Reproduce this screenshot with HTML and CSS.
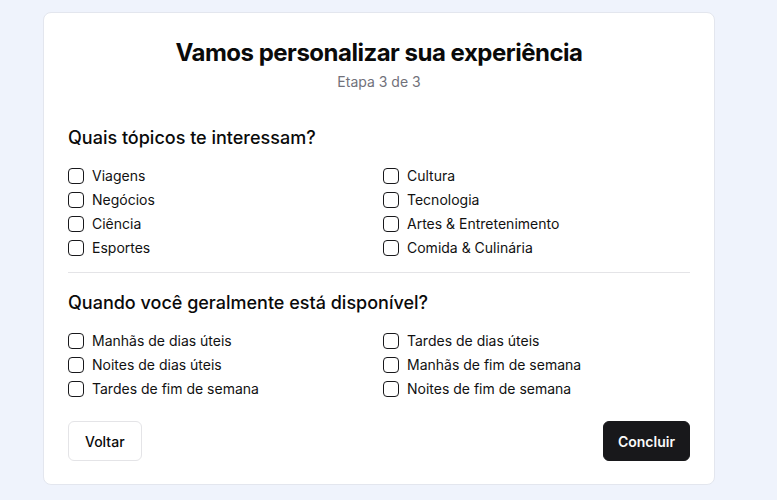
FILE: index.html
```html
<!DOCTYPE html>
<html lang="pt">
<head>
<meta charset="utf-8">
<link rel="stylesheet" href="styles.css">
</head>
<body>
<div class="page">
  <div class="card">
    <header class="head">
      <h1 class="title">Vamos personalizar sua experiência</h1>
      <p class="step">Etapa 3 de 3</p>
    </header>
    <section class="group">
      <h2 class="question">Quais tópicos te interessam?</h2>
      <div class="options">
        <label class="opt"><span class="box"></span>Viagens</label>
        <label class="opt"><span class="box"></span>Cultura</label>
        <label class="opt"><span class="box"></span>Negócios</label>
        <label class="opt"><span class="box"></span>Tecnologia</label>
        <label class="opt"><span class="box"></span>Ciência</label>
        <label class="opt"><span class="box"></span>Artes &amp; Entretenimento</label>
        <label class="opt"><span class="box"></span>Esportes</label>
        <label class="opt"><span class="box"></span>Comida &amp; Culinária</label>
      </div>
    </section>
    <hr class="divider">
    <section class="group">
      <h2 class="question">Quando você geralmente está disponível?</h2>
      <div class="options">
        <label class="opt"><span class="box"></span>Manhãs de dias úteis</label>
        <label class="opt"><span class="box"></span>Tardes de dias úteis</label>
        <label class="opt"><span class="box"></span>Noites de dias úteis</label>
        <label class="opt"><span class="box"></span>Manhãs de fim de semana</label>
        <label class="opt"><span class="box"></span>Tardes de fim de semana</label>
        <label class="opt"><span class="box"></span>Noites de fim de semana</label>
      </div>
    </section>
    <footer class="actions">
      <button class="btn btn-back">Voltar</button>
      <button class="btn btn-next">Concluir</button>
    </footer>
  </div>
</div>
</body>
</html>
```
FILE: styles.css
```css
* { box-sizing: border-box; }
html, body { margin: 0; padding: 0; }
body {
  background: #eff3fc;
  font-family: Inter, "Liberation Sans", Arial, sans-serif;
  color: #111;
}
.page {
  padding: 12px 0 0 43px;
}
.card {
  width: 672px;
  background: #fff;
  border: 1px solid #e3e6ee;
  border-radius: 8px;
  padding: 24px 24px 23px;
}
.head { text-align: center; }
.title {
  margin: 0;
  font-size: 24px;
  line-height: 32px;
  font-weight: 700;
  letter-spacing: -0.5px;
  color: #0a0a0a;
}
.step {
  margin: 3px 0 0;
  font-size: 14px;
  line-height: 20px;
  color: #71717a;
}
.group { margin-top: 32px; }
.group + .divider + .group { margin-top: 0; }
.question {
  margin: 0 0 14px;
  font-size: 18px;
  line-height: 28px;
  font-weight: 500;
  color: #0a0a0a;
}
.options {
  display: grid;
  grid-template-columns: 1fr 1fr;
  column-gap: 8px;
  row-gap: 4px;
}
.opt {
  display: flex;
  align-items: center;
  gap: 8px;
  font-size: 14px;
  line-height: 20px;
  color: #111;
}
.box {
  width: 16px;
  height: 16px;
  border: 1.5px solid #18181b;
  border-radius: 4px;
  flex: none;
}
.divider {
  border: 0;
  border-top: 1px solid #e4e4e7;
  margin: 14px 0 16px;
}
.actions {
  display: flex;
  justify-content: space-between;
  margin-top: 22px;
}
.btn {
  height: 40px;
  padding: 0 16px;
  border-radius: 6px;
  font-family: inherit;
  font-size: 14px;
  font-weight: 500;
}
.btn-back {
  background: #fff;
  border: 1px solid #e4e4e7;
  color: #0a0a0a;
}
.btn-next {
  background: #18181b;
  border: 1px solid #18181b;
  color: #fafafa;
  font-weight: 600;
  padding: 0 14px;
}
```
